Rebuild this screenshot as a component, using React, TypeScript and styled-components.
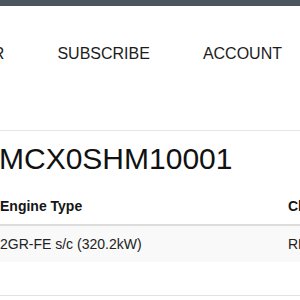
import React from 'react'
import styled, { createGlobalStyle } from 'styled-components'

const GlobalStyle = createGlobalStyle`
  html, body {
    margin: 0;
    padding: 0;
    background: #fff;
    overflow: hidden;
  }
  body {
    font-family: "Liberation Sans", Arial, sans-serif;
    color: #222;
  }
`

const TopBar = styled.div`
  height: 6px;
  background-color: #4b555e;
`

const Header = styled.header`
  height: 124px;
  border-bottom: 1px solid #e5e5e5;
`

const Nav = styled.nav`
  display: flex;
  justify-content: flex-end;
  gap: 53px;
  padding: 38px 18px 0 0;
  white-space: nowrap;
`

const NavItem = styled.a`
  font-size: 16px;
  line-height: 20px;
  color: #1c1c1c;
  text-decoration: none;
  text-transform: uppercase;
  flex-shrink: 0;
`

const Main = styled.main`
  margin-left: -1px;
`

const Title = styled.h1`
  margin: 11px 0 0;
  font-size: 30px;
  font-weight: 400;
  line-height: 33px;
  color: #111;
`

const SpecTable = styled.table`
  width: 440px;
  margin: 13px 0 0 -7px;
  border-collapse: collapse;
  table-layout: fixed;
  font-size: 14px;
  line-height: 20px;
  white-space: nowrap;
`

const HeadCell = styled.th<{ w?: number }>`
  box-sizing: border-box;
  width: ${(p) => (p.w ? `${p.w}px` : 'auto')};
  padding: 8px;
  text-align: left;
  font-weight: 700;
  color: #151515;
  border-bottom: 2px solid #ddd;
`

const Row = styled.tr<{ striped?: boolean }>`
  background-color: ${(p) => (p.striped ? '#f9f9f9' : 'transparent')};
`

const Cell = styled.td<{ tall?: boolean }>`
  padding: 8px;
  height: ${(p) => (p.tall ? '17px' : '20px')};
  color: #222;
`

const Rule = styled.div`
  border-top: 1px solid #e2e2e2;
`

export default function App() {
  return (
    <>
      <GlobalStyle />
      <TopBar />
      <Header>
        <Nav>
          <NavItem href="#">Register</NavItem>
          <NavItem href="#">Subscribe</NavItem>
          <NavItem href="#">Account</NavItem>
        </Nav>
      </Header>
      <Main>
        <Title>MCX0SHM10001</Title>
        <SpecTable>
          <thead>
            <tr>
              <HeadCell w={288}>Engine Type</HeadCell>
              <HeadCell>Chassis</HeadCell>
            </tr>
          </thead>
          <tbody>
            <Row striped>
              <Cell>2GR-FE s/c (320.2kW)</Cell>
              <Cell>RHD</Cell>
            </Row>
            <Row>
              <Cell tall />
              <Cell tall />
            </Row>
          </tbody>
        </SpecTable>
        <Rule />
      </Main>
    </>
  )
}
